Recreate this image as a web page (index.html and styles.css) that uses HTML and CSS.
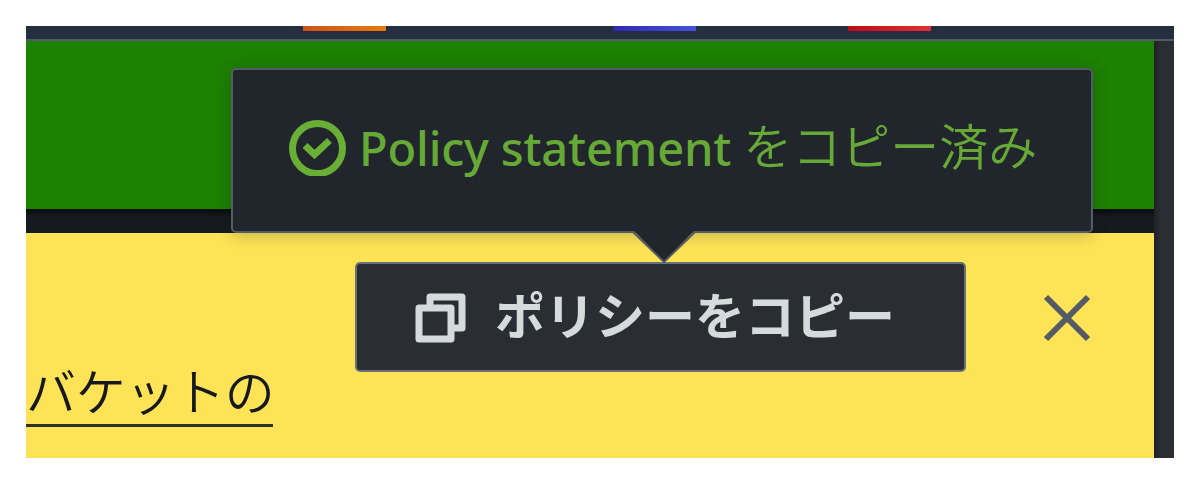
FILE: index.html
```
<!DOCTYPE html>
<html lang="ja">
<head>
    <meta charset="UTF-8">
    <meta name="viewport" content="width=device-width, initial-scale=1.0">
    <title>ポリシーをコピー</title>
    <link rel="stylesheet" href="styles.css">
</head>
<body>
    <div class="console">
        <div class="topnav">
            <span class="service orange"></span>
            <span class="service blue"></span>
            <span class="service red"></span>
        </div>
        <div class="content">
            <div class="main">
                <div class="flash-success"></div>
                <div class="flash-warning">
                    <a class="bucket-link">バケットの</a>
                    <div class="copy">
                        <button class="copy-button" type="button">
                            <svg class="copy-icon" viewBox="0 0 52 52">
                                <path d="M4 17H36V48H4ZM15 17V6H47V37H36" />
                            </svg>
                            <span class="copy-label">ポリシーをコピー</span>
                        </button>
                        <div class="tooltip">
                            <svg class="check-icon" viewBox="0 0 58 56">
                                <circle cx="28.500" cy="28.500" r="25" />
                                <path d="M16 25.500L25.500 34.500L40.500 20.500" />
                            </svg>
                            <span class="tooltip-en">Policy statement</span>
                            <span class="tooltip-ja">をコピー済み</span>
                            <svg class="arrow" viewBox="0 0 64 32">
                                <path class="arrow-fill" d="M2 0L32 31L62 0Z" />
                                <path class="arrow-line" d="M1 1L32 31L63 1" />
                            </svg>
                        </div>
                    </div>
                    <button class="close" type="button" aria-label="閉じる">
                        <svg viewBox="0 0 48 48">
                            <path d="M3 3L45 45M45 3L3 45" />
                        </svg>
                    </button>
                </div>
            </div>
            <div class="side"></div>
        </div>
    </div>
</body>
</html>
```
FILE: styles.css
```
body {
    margin: 0;
    padding: 26px;
    height: 484px;
    box-sizing: border-box;
    background-color: #fff;
    font-family: "Noto Sans CJK JP", sans-serif;
    overflow: hidden;
}
button {
    padding: 0;
    border: none;
    background: none;
    font-family: inherit;
}
svg {
    display: block;
    flex: none;
    fill: none;
}
.console {
    display: flex;
    flex-direction: column;
    height: 432px;
}
.topnav {
    display: flex;
    height: 15px;
    box-sizing: border-box;
    padding-left: 277px;
    background-color: #232f3e;
    border-bottom: 2px solid #545b64;
}
.service {
    width: 83px;
    height: 5px;
}
.orange {
    background: linear-gradient(90deg, #cb531c, #e87a0c);
}
.blue {
    margin-left: 227px;
    background: linear-gradient(90deg, #3029ae, #4354d8);
}
.red {
    margin-left: 152px;
    background: linear-gradient(90deg, #bd0c19, #df3136);
}
.content {
    display: flex;
    flex: 1;
}
.main {
    display: flex;
    flex-direction: column;
    gap: 24px;
    width: 1128px;
    background: linear-gradient(#080b0c, #16191f) 0 168px / 100% 8px no-repeat #16191f;
}
.flash-success {
    height: 168px;
    background-color: #1d8102;
}
.flash-warning {
    display: flex;
    align-items: flex-start;
    flex: 1;
    background-color: #ffe357;
}
.bucket-link {
    width: 247px;
    height: 61px;
    margin-top: 130px;
    border-bottom: 3px solid #30312b;
    color: #16191f;
    font-size: 50px;
    font-weight: 350;
    letter-spacing: -0.3px;
    line-height: 52px;
    white-space: nowrap;
}
.copy {
    position: relative;
    margin: 29px 0 0 82px;
}
.copy-button {
    display: flex;
    align-items: center;
    gap: 28px;
    width: 611px;
    height: 110px;
    box-sizing: border-box;
    padding-left: 58px;
    border: 2px solid #687078;
    border-radius: 5px;
    background-color: #2a2e33;
    color: #d5dbdb;
    font-size: 50px;
    font-weight: 700;
    line-height: 60px;
    white-space: nowrap;
}
.copy-icon {
    width: 52px;
    height: 52px;
    stroke: #d5dbdb;
    stroke-width: 7;
    stroke-linejoin: round;
}
.copy-label {
    padding-bottom: 9px;
}
.tooltip {
    position: absolute;
    left: -124px;
    bottom: 139px;
    display: flex;
    align-items: center;
    width: 862px;
    height: 165px;
    box-sizing: border-box;
    padding-left: 56px;
    border: 2px solid #545b64;
    border-radius: 5px;
    background-color: #21252c;
    box-shadow: 0 2px 16px rgba(0, 28, 36, 0.25);
    color: #67a936;
    font-size: 49px;
    line-height: 60px;
    white-space: nowrap;
}
.check-icon {
    width: 58px;
    height: 56px;
    margin-bottom: 5px;
    stroke: #6aaf35;
    stroke-width: 7;
}
.tooltip-en {
    margin-left: 12px;
    padding-bottom: 6px;
    font-family: "Noto Sans", sans-serif;
    font-size: 47px;
    font-weight: 500;
    letter-spacing: -0.15px;
}
.tooltip-ja {
    margin-left: 12px;
    padding-bottom: 14px;
    font-weight: 350;
}
.arrow {
    position: absolute;
    left: 399px;
    top: 161px;
    width: 64px;
    height: 32px;
}
.arrow-fill {
    fill: #21252c;
}
.arrow-line {
    stroke: #545b64;
    stroke-width: 2;
}
.close {
    width: 48px;
    height: 48px;
    margin: 61px 0 0 77px;
}
.close svg {
    width: 48px;
    height: 48px;
    stroke: #545b64;
    stroke-width: 6;
}
.side {
    flex: 1;
    background: linear-gradient(90deg, #1d2124, #2a2e33 7px);
}
```
